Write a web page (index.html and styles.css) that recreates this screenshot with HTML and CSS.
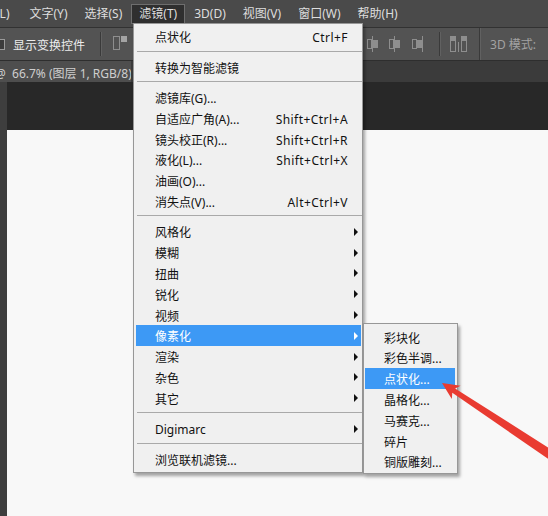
FILE: index.html
```html
<!DOCTYPE html>
<html lang="zh-CN">
<head>
    <meta charset="UTF-8">
    <title>滤镜 - 像素化</title>
    <link rel="stylesheet" href="styles.css">
</head>
<body>
    <div class="menubar">
        <span class="item first">(L)</span>
        <span class="item">文字(Y)</span>
        <span class="item">选择(S)</span>
        <span class="item open">滤镜(T)</span>
        <span class="item">3D(D)</span>
        <span class="item">视图(V)</span>
        <span class="item">窗口(W)</span>
        <span class="item">帮助(H)</span>
    </div>

    <div class="options">
        <span class="check"></span>
        <span class="opt-label">显示变换控件</span>
        <span class="vsep"></span>
        <svg class="tool-icon" width="15" height="14" viewBox="0 0 15 14">
            <rect x="0.5" y="0.5" width="6" height="13" fill="none" stroke="#8e8e8e"/>
            <rect x="8" y="0" width="6" height="6" fill="#a4a4a4"/>
        </svg>
        <div class="opt-right">
            <svg class="align a0" width="13" height="16" viewBox="0 0 13 16">
                <path d="M6.5 0v16" stroke="#8e8e8e"/>
                <rect x="1.5" y="3.5" width="4" height="9" fill="none" stroke="#8e8e8e"/>
                <rect x="7" y="4" width="5" height="8" fill="#8e8e8e"/>
            </svg>
            <svg class="align a1" width="13" height="16" viewBox="0 0 13 16">
                <path d="M6.5 0v16" stroke="#8e8e8e"/>
                <rect x="1.5" y="3.5" width="4" height="9" fill="none" stroke="#8e8e8e"/>
                <rect x="7" y="4" width="5" height="8" fill="#8e8e8e"/>
            </svg>
            <svg class="align a2" width="13" height="16" viewBox="0 0 13 16">
                <path d="M11.5 0v16" stroke="#8e8e8e"/>
                <rect x="1.5" y="3.5" width="4" height="9" fill="none" stroke="#8e8e8e"/>
                <rect x="6" y="4" width="5" height="8" fill="#8e8e8e"/>
            </svg>
            <span class="vsep s1"></span>
            <svg class="dist" width="17" height="16" viewBox="0 0 17 16">
                <rect x="0.5" y="0.5" width="5" height="15" fill="none" stroke="#8e8e8e"/>
                <rect x="0" y="0" width="6" height="5" fill="#8e8e8e"/>
                <rect x="11.5" y="0.5" width="5" height="15" fill="none" stroke="#8e8e8e"/>
                <rect x="11" y="0" width="6" height="5" fill="#8e8e8e"/>
                <path d="M8.5 6v10" stroke="#8e8e8e"/>
            </svg>
            <span class="vsep tall"></span>
            <span class="mode">3D 模式:</span>
        </div>
    </div>

    <div class="tabs">
        <div class="tab"><span class="tab-title">@&nbsp;&nbsp;66.7% (图层 1, RGB/8)</span></div>
    </div>

    <div class="workspace">
        <div class="toolstrip"></div>
        <div class="canvas">
            <div class="pasteboard"></div>
            <div class="doc"></div>
        </div>
    </div>

    <!-- filter menu -->
    <div class="dropdown">
        <div class="row"><span>点状化</span><span class="key">Ctrl+F</span></div>
        <div class="sep"></div>
        <div class="row"><span>转换为智能滤镜</span></div>
        <div class="sep"></div>
        <div class="row"><span>滤镜库(G)...</span></div>
        <div class="row"><span>自适应广角(A)...</span><span class="key">Shift+Ctrl+A</span></div>
        <div class="row"><span>镜头校正(R)...</span><span class="key">Shift+Ctrl+R</span></div>
        <div class="row"><span>液化(L)...</span><span class="key">Shift+Ctrl+X</span></div>
        <div class="row"><span>油画(O)...</span></div>
        <div class="row"><span>消失点(V)...</span><span class="key">Alt+Ctrl+V</span></div>
        <div class="sep"></div>
        <div class="row"><span>风格化</span><span class="sub"></span></div>
        <div class="row"><span>模糊</span><span class="sub"></span></div>
        <div class="row"><span>扭曲</span><span class="sub"></span></div>
        <div class="row"><span>锐化</span><span class="sub"></span></div>
        <div class="row"><span>视频</span><span class="sub"></span></div>
        <div class="row hover"><span>像素化</span><span class="sub"></span></div>
        <div class="row"><span>渲染</span><span class="sub"></span></div>
        <div class="row"><span>杂色</span><span class="sub"></span></div>
        <div class="row"><span>其它</span><span class="sub"></span></div>
        <div class="sep"></div>
        <div class="row"><span>Digimarc</span><span class="sub"></span></div>
        <div class="sep"></div>
        <div class="row"><span>浏览联机滤镜...</span></div>
    </div>

    <!-- pixelate submenu -->
    <div class="submenu">
        <div class="row">彩块化</div>
        <div class="row">彩色半调...</div>
        <div class="row hover">点状化...</div>
        <div class="row">晶格化...</div>
        <div class="row">马赛克...</div>
        <div class="row">碎片</div>
        <div class="row">铜版雕刻...</div>
    </div>

    <svg class="callout" width="548" height="516" viewBox="0 0 548 516">
        <polygon points="442,383 460.6,385.7 455.1,388.6 562.8,456.8 557.2,465.2 452.3,392.8 451.8,399.1" fill="#e93b31"/>
    </svg>
</body>
</html>
```

FILE: styles.css
```css
* {
    box-sizing: border-box;
}

body {
    margin: 0;
    width: 548px;
    height: 516px;
    overflow: hidden;
    position: relative;
    background: #f8f8f8;
    font-family: "Noto Sans", "Noto Sans CJK SC", sans-serif;
    font-size: 12px;
}

/* top menu bar */
.menubar {
    height: 28px;
    background: #4a4a4a;
    border-bottom: 1px solid #323232;
    display: flex;
    align-items: center;
    gap: 1px;
    color: #dedede;
    white-space: nowrap;
}

.menubar .item {
    padding: 0 7px;
    line-height: 18px;
    border: 1px solid transparent;
}

.menubar .first {
    margin-left: -12px;
    margin-right: 3px;
}

.menubar .open {
    background: #2f2f2f;
    border-color: #6e6e6e;
}

/* options bar */
.options {
    height: 33px;
    background: #535353;
    border-bottom: 1px solid #2e2e2e;
    display: flex;
    align-items: center;
    color: #ececec;
    white-space: nowrap;
}

.check {
    width: 11px;
    height: 11px;
    margin-left: -6px;
    border: 1px solid #9a9a9a;
    background: #3c3c3c;
}

.opt-label {
    margin-left: 8px;
    padding-top: 1px;
}

.vsep {
    width: 1px;
    height: 24px;
    background: #3a3a3a;
    box-shadow: 1px 0 0 #616161;
    margin-left: 15px;
}

.tool-icon {
    margin-left: 12px;
    margin-top: -2px;
}

.opt-right {
    margin-left: auto;
    height: 100%;
    display: flex;
    align-items: center;
}

.align.a1 {
    margin-left: 9px;
}

.align.a2 {
    margin-left: 10px;
}

.vsep.s1 {
    margin-left: 15px;
}

.dist {
    margin-left: 10px;
}

.vsep.tall {
    height: 100%;
    margin-left: 12px;
}

.mode {
    margin-left: 10px;
    margin-right: 12px;
    color: #a2a2a2;
}

/* document tabs */
.tabs {
    height: 21px;
    background: #3b3b3b;
    display: flex;
}

.tab {
    width: 131px;
    background: #4e4e4e;
    color: #cecece;
    padding-top: 4px;
    line-height: 17px;
    white-space: nowrap;
    overflow: hidden;
}

.tab-title {
    margin-left: -5px;
}

/* work area */
.workspace {
    display: flex;
    height: 434px;
}

.toolstrip {
    width: 7px;
    background: #3e3e3e;
}

.canvas {
    flex: 1;
    display: flex;
    flex-direction: column;
}

.pasteboard {
    height: 48px;
    background: #282828;
}

.doc {
    flex: 1;
    background: #f8f8f8;
}

/* menus */
.dropdown,
.submenu {
    position: absolute;
    background: #f0f0f0;
    border: 1px solid #979797;
    box-shadow: 2px 3px 3px rgba(0, 0, 0, 0.35);
    color: #111;
    white-space: nowrap;
}

.dropdown {
    left: 133px;
    top: 23px;
    width: 230px;
    padding: 2.3px 1px 2.2px 2px;
}

.submenu {
    left: 363px;
    top: 323px;
    width: 95px;
    padding: 2.6px 2px 1px 1px;
}

.row {
    height: 20.8px;
    line-height: 16.8px;
    display: flex;
    align-items: center;
    padding: 4px 13px 0 19px;
}

.row .key {
    margin-left: auto;
    letter-spacing: 0.45px;
}

.row .sub {
    margin-left: auto;
    margin-right: -10px;
    margin-top: -4px;
    width: 0;
    height: 0;
    border-left: 4px solid #111;
    border-top: 4px solid transparent;
    border-bottom: 4px solid transparent;
}

.row.hover {
    background: #3d99f5;
    color: #fff;
}

.row.hover .sub {
    border-left-color: #fff;
}

.sep {
    height: 9.6px;
    padding-top: 3.5px;
}

.sep::after {
    content: "";
    display: block;
    margin: 0 -1px 0 1px;
    border-top: 1px solid #a9a9a9;
}

.callout {
    position: absolute;
    left: 0;
    top: 0;
    pointer-events: none;
}
```
